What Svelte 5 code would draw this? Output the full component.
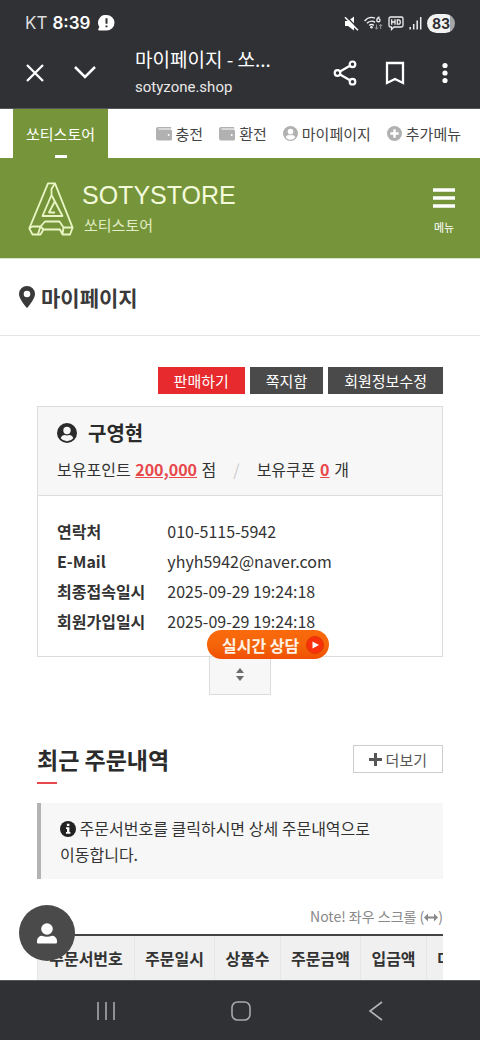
<script>
  const details = [
    ['연락처', '010-5115-5942'],
    ['E-Mail', 'yhyh5942@naver.com'],
    ['최종접속일시', '2025-09-29 19:24:18'],
    ['회원가입일시', '2025-09-29 19:24:18']
  ];
  const columns = [
    ['주문서번호', 97],
    ['주문일시', 80],
    ['상품수', 66],
    ['주문금액', 80],
    ['입금액', 66],
    ['미입금액', 80]
  ];
</script>

{#snippet wallet()}
  <svg width="16" height="14" viewBox="0 0 16 14" aria-hidden="true">
    <path d="M2 0h12a1.5 1.5 0 0 1 1.5 1.6H2.4v1H14.500a1.500 1.500 0 0 1 1.500 1.500V12a1.500 1.500 0 0 1-1.500 1.500H2A2 2 0 0 1 0 11.500V2a2 2 0 0 1 2-2z" fill="#b1b1b1" />
    <circle cx="12.700" cy="8" r="1" fill="#fff" />
  </svg>
{/snippet}

{#snippet userCircle(size, color, hole)}
  <svg width={size} height={size} viewBox="0 0 20 20" aria-hidden="true">
    <circle cx="10" cy="10" r="10" fill={color} />
    <circle cx="10" cy="7.500" r="3.700" fill={hole} />
    <path d="M3.700 15.200c.7-2.300 2.300-3.300 4-3.300.7.3 1.500.5 2.300.5s1.600-.2 2.300-.5c1.700 0 3.300 1 4 3.300A8.200 8.200 0 0 1 10 18.200a8.200 8.200 0 0 1-6.300-3z" fill={hole} />
  </svg>
{/snippet}

<div class="phone">
  <header class="browser">
    <div class="status">
      <span class="carrier">KT</span>
      <strong class="clock">8:39</strong>
      <svg class="bubble" width="17" height="16" viewBox="0 0 17 16" aria-hidden="true">
        <path d="M8.500 0a8 7.700 0 1 1 0 15.400H1.200a1 1 0 0 1-.9-1.500L1.400 12A7.700 7.700 0 0 1 8.500 0z" fill="#fff" />
        <path d="M8.500 3.300v5.400M8.500 10.500v1.800" stroke="#303135" stroke-width="2" />
      </svg>
      <div class="signals">
        <svg width="15" height="15" viewBox="0 0 15 15" aria-hidden="true">
          <path d="M1 5h3l6-4.500v14L4 10H1z" fill="#fff" />
          <path d="M2 .3l13 13" stroke="#303135" stroke-width="1.500" />
          <path d="M1 1.300l13 13" stroke="#fff" stroke-width="1.500" />
        </svg>
        <svg width="19" height="15" viewBox="0 0 19 15" aria-hidden="true">
          <g fill="none" stroke="#eee" stroke-width="1.400">
            <path d="M.6 5C3.500 1.500 7.600.8 11 2.200M3 7.300c2-2.200 5.500-2.700 8-1M5.300 9.500c1.200-1.300 3.300-1.300 4.500 0" />
            <path d="M15.500 .8c-2 .8-2.700 2-2.700 3.400a1.600 1.600 0 1 0 1.600-1.600" />
          </g>
          <circle cx="7.500" cy="11.300" r="1.300" fill="#eee" />
          <path d="M12.500 8.500v4.500m-1.600-1.600l1.600 1.800 1.600-1.800M16.700 13V8.500m-1.600 1.600l1.600-1.800 1.600 1.800" stroke="#999" fill="none" />
        </svg>
        <svg width="16" height="15" viewBox="0 0 16 15" aria-hidden="true">
          <path d="M2.500 1h11A1.500 1.500 0 0 1 15 2.500v7a1.500 1.500 0 0 1-1.500 1.500H6l-2.500 2.500V11h-1A1.500 1.500 0 0 1 1 9.500v-7A1.500 1.500 0 0 1 2.500 1z" fill="none" stroke="#eee" stroke-width="1.300" />
          <path d="M3.700 3.300v5.400M7 3.300v5.400M3.700 6H7M9.300 3.800v4.400H10.500a1.800 2.200 0 0 0 0-4.400z" fill="none" stroke="#eee" stroke-width="1.300" />
        </svg>
        <svg width="13" height="15" viewBox="0 0 13 15" aria-hidden="true">
          <path d="M1.200 11v2.500M4.700 8v5.500M8.200 4.500v9M11.700 1v12.500" stroke="#eee" stroke-width="1.500" />
        </svg>
        <span class="battery">83</span>
      </div>
    </div>
    <div class="toolbar">
      <button aria-label="닫기">
        <svg width="20" height="20" viewBox="0 0 20 20"><path d="M2 2l16 16M18 2L2 18" stroke="#fff" stroke-width="2.300" /></svg>
      </button>
      <button aria-label="최소화">
        <svg width="24" height="20" viewBox="0 0 24 20"><path d="M2 4l10 10L22 4" fill="none" stroke="#fff" stroke-width="2.500" /></svg>
      </button>
      <div class="page-name">
        <div class="page-title">마이페이지 - 쏘...</div>
        <div class="page-url">sotyzone.shop</div>
      </div>
      <button aria-label="공유">
        <svg width="24" height="26" viewBox="0 0 24 26">
          <g fill="none" stroke="#fff" stroke-width="2.200"><circle cx="4.500" cy="13" r="2.800" /><circle cx="19.500" cy="4.300" r="2.800" /><circle cx="19.500" cy="21.700" r="2.800" /><path d="M7 11.500l10-5.700M7 14.500l10 5.700" /></g>
        </svg>
      </button>
      <button aria-label="북마크">
        <svg width="20" height="24" viewBox="0 0 20 24"><path d="M2 2h16v20l-8-4-8 4z" fill="none" stroke="#fff" stroke-width="2.300" /></svg>
      </button>
      <button class="overflow" aria-label="더보기">
        <svg width="6" height="22" viewBox="0 0 6 22" fill="#fff"><circle cx="3" cy="3.500" r="2.600" /><circle cx="3" cy="11" r="2.600" /><circle cx="3" cy="18.500" r="2.600" /></svg>
      </button>
    </div>
  </header>

  <main>
    <nav class="top-nav">
      <a class="store" href="#store">쏘티스토어</a>
      <div class="links">
        <a href="#charge">{@render wallet()}충전</a>
        <a href="#exchange">{@render wallet()}환전</a>
        <a href="#mypage">{@render userCircle(15, '#b1b1b1', '#fff')}마이페이지</a>
        <a href="#more">
          <svg width="15" height="15" viewBox="0 0 15 15" aria-hidden="true">
            <circle cx="7.500" cy="7.500" r="7.500" fill="#b1b1b1" />
            <path d="M7.500 3.300v8.400M3.300 7.500h8.400" stroke="#fff" stroke-width="2.400" />
          </svg>추가메뉴
        </a>
      </div>
    </nav>

    <div class="brand">
      <a class="logo" href="#home">
        <svg width="46" height="54" viewBox="0 0 46 54" aria-hidden="true">
          <g fill="none" stroke="#e9f6c4" stroke-width="1.800" stroke-linejoin="round">
            <path d="M20 1.300h7L44.600 45.700 42 52.500h-7.500L32 47.500H15.500L12.500 52.500h-8L1.300 46.300z" />
            <path d="M1.300 46.300L4.500 44.500H12.500L17 39.500H31.500L35.500 45.500H41.500L44.600 45.700M12.500 44.500L15.500 47.500M12.500 44.500L10 52M35.500 45.500L34.500 52" />
            <path d="M27 1.300L23.500 7V13L34.500 34H14.500L23.500 13M26.500 20L21 30.500H27" />
          </g>
        </svg>
        <span>
          <span class="logo-name">SOTYSTORE</span>
          <span class="logo-sub">쏘티스토어</span>
        </span>
      </a>
      <button class="menu">
        <svg width="22" height="20" viewBox="0 0 22 20" aria-hidden="true"><path d="M0 2h22M0 10h22M0 18h22" stroke="#fff" stroke-width="3.400" /></svg>
        메뉴
      </button>
    </div>

    <h1>
      <svg width="16" height="22" viewBox="0 0 16 22" aria-hidden="true">
        <path fill-rule="evenodd" d="M8 0a8 8 0 0 1 8 8c0 3.500-3.500 8.500-7.200 13.300a1 1 0 0 1-1.600 0C3.500 16.500 0 11.500 0 8a8 8 0 0 1 8-8zM8 4.700a3.300 3.300 0 1 0 0 6.600 3.300 3.300 0 0 0 0-6.600z" fill="#3a3a3a" />
      </svg>마이페이지
    </h1>

    <div class="content">
      <div class="actions">
        <button class="sell">판매하기</button>
        <button>쪽지함</button>
        <button>회원정보수정</button>
      </div>

      <section class="card">
        <div class="card-head">
          <h2>{@render userCircle(20, '#2b2b2b', '#f7f7f7')}구영현</h2>
          <p>
            <span>보유포인트 <a href="#points">200,000</a> 점</span>
            <i>/</i>
            <span>보유쿠폰 <a href="#coupons">0</a> 개</span>
          </p>
        </div>
        <dl>
          {#each details as [label, value]}
            <dt>{label}</dt>
            <dd>{value}</dd>
          {/each}
        </dl>
        <button class="chat">
          실시간 상담
          <svg width="18" height="18" viewBox="0 0 18 18" aria-hidden="true">
            <circle cx="9" cy="9" r="8.500" fill="#f8300c" stroke="#e23804" /><path d="M6.500 5.500L13 9l-6.500 3.500z" fill="#fff" />
          </svg>
        </button>
      </section>
      <button class="toggle" aria-label="펼치기">
        <svg width="8" height="13" viewBox="0 0 8 13"><path d="M0 5l4-5 4 5zM0 8h8l-4 5z" fill="#6b6b6b" /></svg>
      </button>

      <div class="section-head">
        <h2>최근 주문내역</h2>
        <a class="more" href="#orders">
          <svg width="13" height="13" viewBox="0 0 13 13" aria-hidden="true"><path d="M6.500 0v13M0 6.500h13" stroke="#555" stroke-width="3" /></svg>더보기
        </a>
      </div>

      <p class="notice">
        <svg width="16" height="16" viewBox="0 0 16 16" aria-hidden="true">
          <circle cx="8" cy="8" r="8" fill="#222" />
          <path d="M6.900 2.700h2.500v2.300H6.900zM6 6.300h3.400v4.700h1v1.700H6V11h1V8H6z" fill="#fff" />
        </svg>
        주문서번호를 클릭하시면 상세 주문내역으로 이동합니다.
      </p>

      <p class="hint">
        Note! 좌우 스크롤 (<svg width="14" height="9" viewBox="0 0 14 9" aria-hidden="true"><path d="M0 4.500L4 .5v3h6v-3l4 4-4 4v-3H4v3z" fill="#888" /></svg>)
      </p>

      <div class="scroller">
        <table>
          <colgroup>
            {#each columns as [, width]}<col style="width: {width}px" />{/each}
          </colgroup>
          <thead>
            <tr>{#each columns as [name]}<th scope="col">{name}</th>{/each}</tr>
          </thead>
        </table>
      </div>
    </div>

    <button class="profile" aria-label="내 정보">
      <svg width="20" height="21" viewBox="0 0 20 21"><circle cx="10" cy="6" r="5.800" fill="#fff" /><path d="M0 19.500v-2A5 5 0 0 1 5 12.800c3 1.300 7 1.300 10 0a5 5 0 0 1 5 4.700v2a1 1 0 0 1-1 1H1a1 1 0 0 1-1-1z" fill="#fff" /></svg>
    </button>
  </main>

  <footer>
    <button aria-label="최근 앱">
      <svg width="20" height="20" viewBox="0 0 20 20"><path d="M2 1v18M10 1v18M18 1v18" stroke="#a9a9ab" stroke-width="1.600" /></svg>
    </button>
    <button aria-label="홈">
      <svg width="20" height="20" viewBox="0 0 20 20"><rect x="1" y="1" width="18" height="18" rx="5.500" fill="none" stroke="#a9a9ab" stroke-width="1.600" /></svg>
    </button>
    <button aria-label="뒤로">
      <svg width="20" height="20" viewBox="0 0 20 20"><path d="M16 1L4 10l12 9" fill="none" stroke="#b5b5b7" stroke-width="1.600" /></svg>
    </button>
  </footer>
</div>

<style>
  :global(body) { margin: 0; background: #fff; }
  * { box-sizing: border-box; }
  .phone {
    display: flex;
    flex-direction: column;
    height: 100vh;
    overflow: hidden;
    font-family: "Noto Sans CJK KR", "Noto Sans", sans-serif;
    font-size: 16px;
    color: #333;
  }
  button { font: inherit; color: inherit; background: none; border: 0; padding: 0; margin: 0; cursor: pointer; }
  a { color: inherit; text-decoration: none; }
  svg { display: block; flex: none; }
  h1, h2, p, dl, dd { margin: 0; }

  .browser { flex: none; background: #303135; color: #fff; height: 109px; border-bottom: 1px solid #55565a; }
  .status { display: flex; align-items: center; gap: 5px; height: 46px; padding: 0 25px; font-family: Inter, sans-serif; font-size: 17px; }
  .carrier { color: #ddd; }
  .clock { font-weight: 600; }
  .bubble { margin-left: 3px; }
  .signals { display: flex; align-items: center; gap: 5px; margin-left: auto; }
  .battery {
    border-radius: 10px; width: 28px; line-height: 19px; text-align: center;
    font-size: 14px; font-weight: 700; color: #303135;
    background: linear-gradient(90deg, #f2f2f2 83%, #a5a5a8 83%);
  }
  .toolbar { display: flex; align-items: center; padding: 0 32px 0 25px; height: 54px; }
  .toolbar button + button { margin-left: 28px; }
  .toolbar .overflow { margin-left: 37px; }
  .page-name { flex: 1; margin-left: 38px; white-space: nowrap; }
  .page-title { font-size: 19px; line-height: 28px; font-weight: 400; }
  .page-url { font-family: Roboto, sans-serif; font-size: 15px; line-height: 28px; color: #e8e8e8; }

  main { flex: 1; min-height: 0; overflow: hidden; position: relative; }
  .top-nav { display: flex; justify-content: space-between; padding: 0 19px 0 13px; height: 49px; font-size: 15px; }
  .store { position: relative; display: flex; align-items: center; padding: 0 13px; background: #76953a; color: #fff; }
  .store::after { content: ""; position: absolute; left: 50%; bottom: 0; width: 12px; height: 3px; margin-left: -6px; background: #fff; }
  .links { display: flex; align-items: center; gap: 16px; color: #444; }
  .links a { display: flex; align-items: center; gap: 4px; }

  .brand { display: flex; justify-content: space-between; align-items: center; height: 101px; padding: 0 25px 0 28px; background: #76953a; border-bottom: 1px solid #d8e3c5; }
  .logo { display: flex; align-items: center; gap: 8px; padding-top: 2px; }
  .logo-name { display: block; font: 25px/32px "Liberation Sans", sans-serif; color: #f3fadc; }
  .logo-sub { display: block; padding-left: 2px; font-size: 15px; line-height: 28px; color: #e2edc6; }
  .menu { display: flex; flex-direction: column; align-items: center; gap: 11px; padding-top: 6px; font-size: 11px; line-height: 16px; color: #fff; }

  h1 { display: flex; align-items: center; gap: 6px; height: 77px; padding: 0 19px; border-bottom: 1px solid #e5e5e5; font-size: 21px; font-weight: 700; color: #3a3a3a; }
  .content { padding: 31px 37px 0; }

  .actions { display: flex; justify-content: flex-end; gap: 5px; }
  .actions button { padding: 0 16px; font-size: 15px; line-height: 27px; background: #4a4a4a; color: #fff; }
  .actions .sell { background: #e62a2d; }

  .card { position: relative; margin-top: 12px; border: 1px solid #dcdcdc; }
  .card-head { padding: 10px 19px 9px; background: #f7f7f7; border-bottom: 1px solid #dcdcdc; }
  .card h2 { display: flex; align-items: center; gap: 11px; font-size: 20px; line-height: 32px; font-weight: 700; color: #2b2b2b; }
  .card p { display: flex; margin-top: 3px; line-height: 34px; }
  .card p a { margin: 0 1px; font-size: 16px; font-weight: 700; color: #e8474b; text-decoration: underline; }
  .card i { margin: 0 17px; font-style: normal; color: #ccc; }
  dl { display: grid; grid-template-columns: auto 1fr; column-gap: 22px; padding: 20px 19px; line-height: 30px; }
  dt { font-weight: 700; color: #333; }
  .chat {
    position: absolute; left: 169px; bottom: -3px;
    display: flex; align-items: center; gap: 7px; height: 29px; padding: 0 5px 0 15px;
    border-radius: 15px; background: linear-gradient(#fb6a0c, #f4650a 50%, #f05003);
    color: #fff3e6; font-size: 16px; line-height: 28px; font-weight: 700; white-space: nowrap;
  }
  .toggle { display: flex; align-items: center; justify-content: center; width: 62px; height: 39px; margin: -1px auto 0; padding-bottom: 3px; background: #f7f7f7; border: 1px solid #dcdcdc; }

  .section-head { display: flex; justify-content: space-between; align-items: flex-start; margin-top: 50px; }
  .section-head h2 { font-size: 23px; line-height: 28px; font-weight: 700; color: #2b2b2b; }
  .section-head h2::after { content: ""; display: block; width: 20px; height: 2px; margin-top: 9px; background: #e8474b; }
  .more { display: flex; align-items: center; gap: 4px; height: 28px; padding: 0 15px; border: 1px solid #ccc; font-size: 15px; color: #555; }

  .notice { margin-top: 19px; padding: 12px 19px; border-left: 4px solid #b3b3b3; background: #f7f7f7; line-height: 26px; word-break: keep-all; }
  .notice svg { display: inline-block; vertical-align: -2px; }
  .hint { margin-top: 25px; text-align: right; font-size: 14px; line-height: 24px; color: #888; }
  .hint svg { display: inline-block; }
  .scroller { margin-top: 6px; overflow-x: auto; scrollbar-width: none; border-top: 2px solid #444; }
  table { table-layout: fixed; width: 469px; border-collapse: collapse; }
  th { height: 45px; padding: 0; background: #f0f0f0; border: 1px solid #e6e6e6; border-top: 0; font-weight: 700; color: #333; white-space: nowrap; }

  .profile { position: absolute; left: 19px; bottom: 19px; display: flex; align-items: center; justify-content: center; width: 56px; height: 56px; border-radius: 50%; background: #4a4a4a; }

  footer { flex: none; display: flex; justify-content: space-between; align-items: center; height: 60px; padding: 0 94px 0 96px; background: #303135; border-top: 1px solid #55565a; }
</style>
